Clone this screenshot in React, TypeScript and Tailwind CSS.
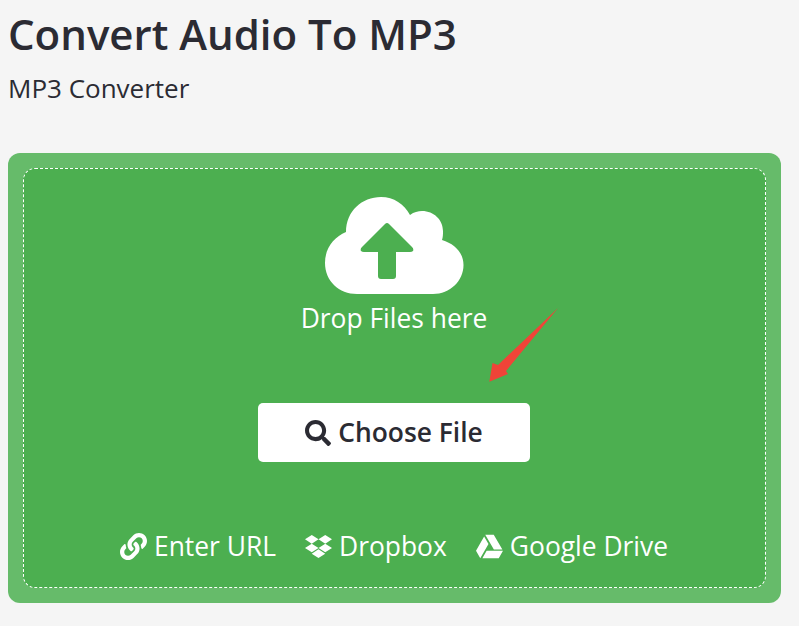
import { FaSearch, FaLink, FaDropbox, FaGoogleDrive } from "react-icons/fa";

function Cloud() {
  return (
    <svg width="139" height="97" viewBox="0 0 139 97" className="block">
      <path
        fill="#fff"
        d="M32 97C14 97 0 84 0 66C0 51 9 40 21 35C21 14 37 0 56 0C69 0 79 7 85 18C89 15 93 14 97 14C109 14 118 23 118 34C118 37 118 40 117 43C130 47 138.500 56 138.500 68C138.500 84 125 97 108 97Z"
      />
      <path
        fill="#4caf50"
        d="M60 27Q62 25 64 27L87 50Q89 52 88 54Q87 55 85 55H71V79Q71 82 68 82H56Q53 82 53 79V55H39Q37 55 36 54Q35 52 37 50Z"
      />
    </svg>
  );
}

function Pointer() {
  return (
    <svg width="72" height="78" viewBox="0 0 72 78" className="absolute left-[487px] top-[306px]">
      <path fill="#f04438" d="M71 2L19 65L21 68L2.300 75.700L5.500 57L11 59Z" />
    </svg>
  );
}

export default function App() {
  return (
    <div className="relative min-h-[626px] bg-[#f5f5f5] px-2 font-['Open_Sans',sans-serif] text-[#2b2b33]">
      <h1 className="pt-[9px] text-[42px] font-semibold leading-[50px]">Convert Audio To MP3</h1>
      <p className="mt-[12px] text-[26px] leading-[34px]">MP3 Converter</p>
      <div className="mt-[48px] h-[450px] w-[773px] rounded-xl bg-[#66bb6a] p-[15px]">
        <div className="flex h-[420px] flex-col items-center rounded-xl border border-dashed border-white bg-[#4caf50] pr-px text-white">
          <div className="mt-[28px]">
            <Cloud />
          </div>
          <div className="mt-[6px] text-[26.4px] leading-[36px]">Drop Files here</div>
          <button className="mt-[67px] flex h-[59px] w-[272px] items-center justify-center gap-[7px] rounded-[5px] bg-white text-[26.4px] font-semibold text-[#2b2b33]">
            <FaSearch className="text-[26px]" />
            Choose File
          </button>
          <div className="mt-[66px] flex items-center gap-[29px] text-[26.4px] leading-[36px]">
            <span className="flex items-center gap-[7px]"><FaLink className="text-[27px]" />Enter URL</span>
            <span className="flex items-center gap-[7px]"><FaDropbox className="text-[27px]" />Dropbox</span>
            <span className="flex items-center gap-[7px]"><FaGoogleDrive className="text-[27px]" />Google Drive</span>
          </div>
        </div>
      </div>
      <Pointer />
    </div>
  );
}
